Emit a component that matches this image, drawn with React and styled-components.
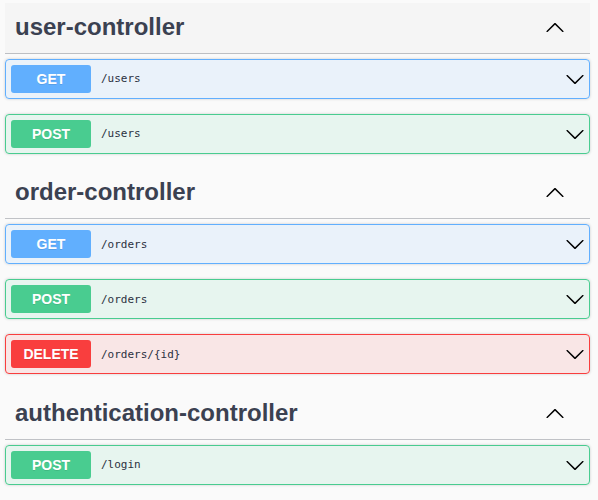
import React from 'react'
import styled, { createGlobalStyle } from 'styled-components'

const GlobalStyle = createGlobalStyle`
    html, body { margin: 0; padding: 0; background: #fafafa; }
    body { font-family: "Liberation Sans", Arial, sans-serif; color: #3b4151; }
`

const methods = {
    GET: { color: '#61affe', bg: 'rgba(97, 175, 254, 0.1)' },
    POST: { color: '#49cc90', bg: 'rgba(73, 204, 144, 0.1)' },
    DELETE: { color: '#f93e3e', bg: 'rgba(249, 62, 62, 0.1)' },
}

const Wrapper = styled.div`
    padding: 3px 8px 0 5px;
`
const Section = styled.section`
    display: flex;
    flex-direction: column;
`
const Tag = styled.h3`
    display: flex;
    align-items: center;
    justify-content: space-between;
    box-sizing: border-box;
    height: 50.5px;
    margin: 0 0 5px;
    padding: 0 25px 2px 10px;
    border-bottom: 1px solid rgba(59, 65, 81, 0.3);
    background: ${p => p.$hover ? 'rgba(0, 0, 0, 0.02)' : 'transparent'};
    font-size: 24px;
    font-weight: 700;
    color: #3b4151;
`
const Block = styled.div`
    display: flex;
    align-items: center;
    box-sizing: border-box;
    height: 40px;
    margin: 0 0 15px;
    padding: 5px 4px 5px 5px;
    border: 1px solid ${p => p.$color};
    border-radius: 4px;
    background: ${p => p.$bg};
    box-shadow: 0 0 3px rgba(0, 0, 0, 0.19);
`
const Method = styled.span`
    min-width: 80px;
    padding: 6px 0;
    border-radius: 3px;
    background: ${p => p.$color};
    color: #fff;
    font-size: 14px;
    font-weight: 700;
    text-align: center;
    text-shadow: 0 1px 0 rgba(0, 0, 0, 0.1);
    line-height: 16px;
`
const Path = styled.span`
    flex: 1;
    padding: 0 10px;
    font-family: "DejaVu Sans Mono", "Liberation Mono", monospace;
    font-size: 11px;
    color: #2b3141;
`
const Arrow = styled.svg`
    width: 20px;
    height: 20px;
    flex-shrink: 0;
    fill: #000;
`

const ChevronUp = () => (
    <Arrow viewBox="0 0 20 20">
        <path d="M17.418 14.908c.272.268.709.268.979 0s.271-.701 0-.969l-7.908-7.83c-.27-.268-.707-.268-.979 0l-7.908 7.83c-.27.268-.27.701 0 .969.271.268.709.268.979 0L10 7.767l7.418 7.141z" />
    </Arrow>
)
const ChevronDown = () => (
    <Arrow viewBox="0 0 20 20">
        <path d="M17.418 6.109c.272-.268.709-.268.979 0s.271.701 0 .969l-7.908 7.83c-.27.268-.707.268-.979 0l-7.908-7.83c-.27-.268-.27-.701 0-.969.271-.268.709-.268.979 0L10 13.25l7.418-7.141z" />
    </Arrow>
)

const sections = [
    { name: 'user-controller', hover: true, ops: [['GET', '/users'], ['POST', '/users']] },
    { name: 'order-controller', ops: [['GET', '/orders'], ['POST', '/orders'], ['DELETE', '/orders/{id}']] },
    { name: 'authentication-controller', ops: [['POST', '/login']] },
]

export default function App() {
    return (
        <>
            <GlobalStyle />
            <Wrapper>
                {sections.map(s => (
                    <Section key={s.name}>
                        <Tag $hover={s.hover}>
                            <span>{s.name}</span>
                            <ChevronUp />
                        </Tag>
                        {s.ops.map(([m, path]) => (
                            <Block key={m + path} $color={methods[m].color} $bg={methods[m].bg}>
                                <Method $color={methods[m].color}>{m}</Method>
                                <Path>{path}</Path>
                                <ChevronDown />
                            </Block>
                        ))}
                    </Section>
                ))}
            </Wrapper>
        </>
    )
}
